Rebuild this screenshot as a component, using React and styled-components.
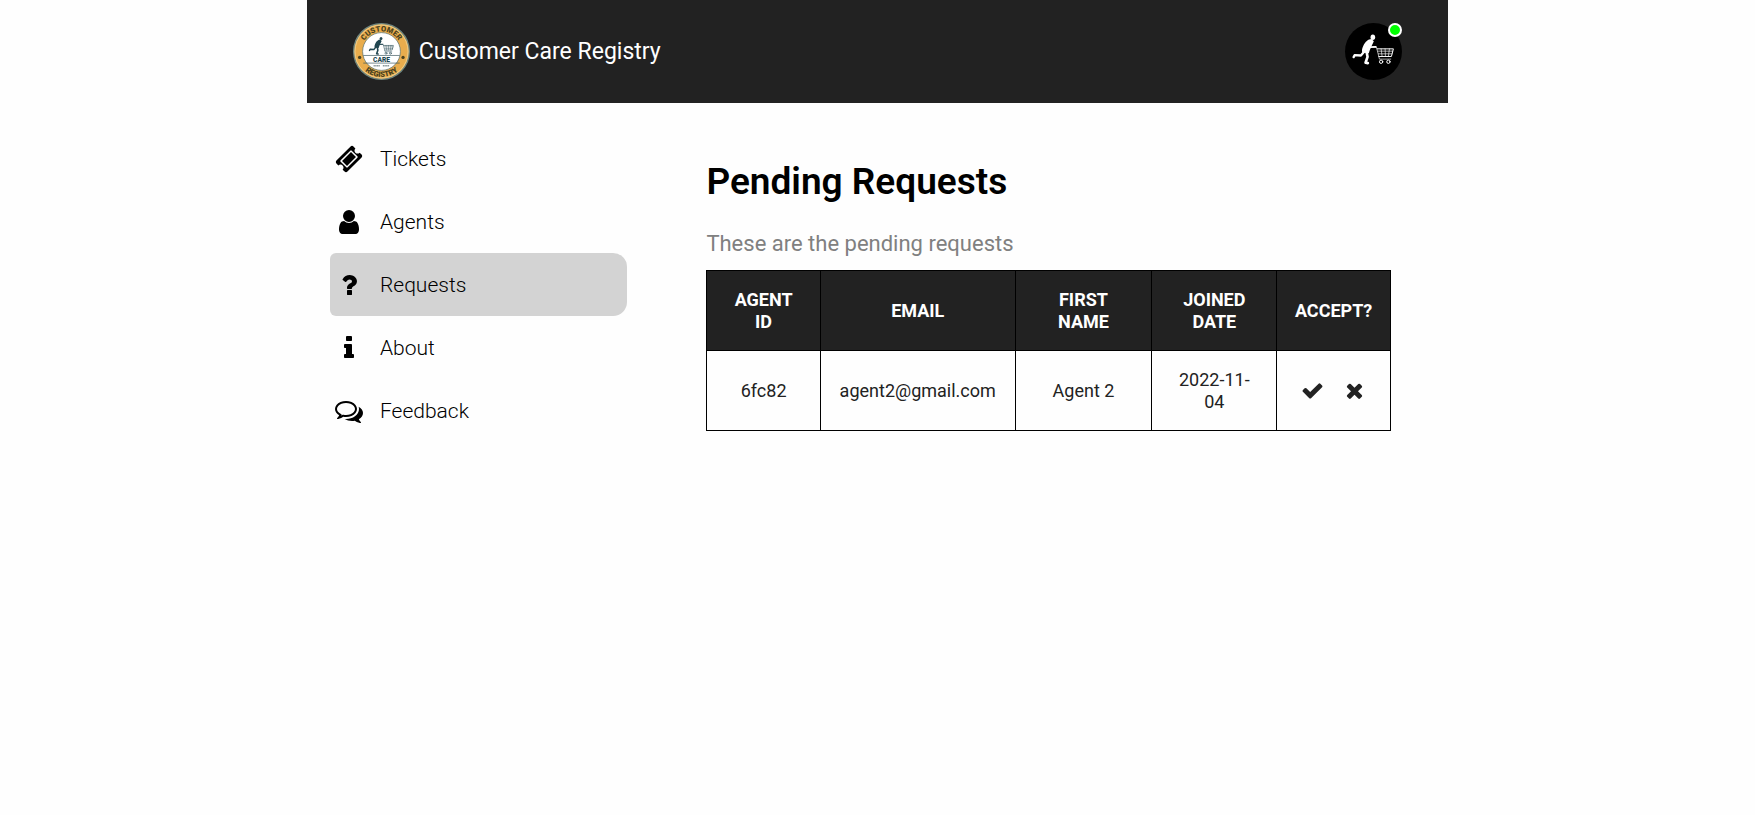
import React from "react";
import styled, { createGlobalStyle } from "styled-components";

const GlobalStyle = createGlobalStyle`
  *, *::before, *::after { box-sizing: border-box; }
  body {
    margin: 0;
    background: #fefefe;
    color: #000;
    font-family: Roboto, "Liberation Sans", sans-serif;
  }
`;

const Page = styled.div`
  width: 65%;
  margin: 0 auto;
`;

const Header = styled.header`
  display: flex;
  align-items: center;
  justify-content: space-between;
  padding: 23px 4%;
  background: #222;
`;

const Brand = styled.a`
  display: flex;
  align-items: center;
  gap: 9px;
  color: #fff;
  font-size: 23px;
  line-height: 29px;
  text-decoration: none;
`;

const Emblem = styled.svg`
  display: block;
  width: 57px;
  height: 57px;
`;

const AvatarButton = styled.button`
  position: relative;
  padding: 0;
  border: 0;
  border-radius: 50%;
  background: #000;
  cursor: pointer;
`;

const OnlineDot = styled.span`
  position: absolute;
  top: 0;
  right: 0;
  width: 14px;
  height: 14px;
  border: 2px solid #fff;
  border-radius: 50%;
  background: #0f0;
`;

const Body = styled.div`
  display: flex;
  align-items: flex-start;
`;

const Sidebar = styled.nav`
  width: 30%;
  padding: 24px 2%;
`;

const NavList = styled.ul`
  margin: 0;
  padding: 0;
  list-style: none;
`;

const NavLink = styled.a`
  display: flex;
  align-items: center;
  gap: 17px;
  height: 63px;
  padding: 0 5px;
  border-radius: 6px 14px 14px 6px;
  background: ${(p) => (p.$active ? "#d3d3d3" : "transparent")};
  color: #000;
  font-size: 21px;
  font-weight: 300;
  text-decoration: none;
`;

const Glyph = styled.svg`
  display: block;
  flex: none;
  width: ${(p) => p.$size}px;
  height: ${(p) => p.$size}px;
  fill: currentColor;
`;

const Content = styled.main`
  width: 70%;
  padding: 57px 5% 40px;
`;

const Title = styled.h1`
  margin: 0;
  font-size: 37px;
  line-height: 44px;
  font-weight: 600;
`;

const Subtitle = styled.p`
  margin: 26px 0 12px;
  color: #808080;
  font-size: 22px;
  line-height: 28px;
`;

const Table = styled.table`
  width: 100%;
  table-layout: fixed;
  border-collapse: collapse;
  color: #222;
  font-size: 18px;
  line-height: 22px;
  text-align: center;
`;

const Column = styled.col`
  width: ${(p) => p.$share}%;
`;

const HeadCell = styled.th`
  height: 80px;
  padding: 0 17px;
  border: 1px solid #000;
  background: #222;
  color: #fff;
  font-weight: 700;
`;

const Cell = styled.td`
  height: 80px;
  padding: 0 17px;
  border: 1px solid #000;
`;

const Actions = styled.div`
  display: flex;
  justify-content: center;
  gap: 19px;
`;

const ActionButton = styled.button`
  padding: 0;
  border: 0;
  background: none;
  color: #222;
  cursor: pointer;
`;

const glyphs = {
  ticket:
    "M1024 452l316 316-572 572-316-316zm-211 979l618-618q19-19 19-45t-19-45l-362-362q-18-18-45-18t-45 18l-618 618q-19 19-19 45t19 45l362 362q18 18 45 18t45-18zm889-637l-907 908q-37 37-90.5 37t-90.5-37l-126-126q56-56 56-136t-56-136-136-56-136 56l-125-126q-37-37-37-90.5t37-90.5l907-906q37-37 90.5-37t90.5 37l125 125q-56 56-56 136t56 136 136 56 136-56l126 125q37 37 37 90.5t-37 90.5z",
  user:
    "M1536 1399q0 109-62.5 187t-150.5 78h-854q-88 0-150.5-78t-62.5-187q0-85 8.5-160.5t31.5-152 58.5-131 94-89 134.5-34.5q131 128 313 128t313-128q76 0 134.5 34.5t94 89 58.5 131 31.5 152 8.5 160.5zm-256-887q0 159-112.5 271.5t-271.5 112.5-271.5-112.5-112.5-271.5 112.5-271.5 271.5-112.5 271.5 112.5 112.5 271.5z",
  question:
    "M1088 1256v240q0 16-12 28t-28 12h-240q-16 0-28-12t-12-28v-240q0-16 12-28t28-12h240q16 0 28 12t12 28zm316-600q0 54-15.5 101t-35 76.5-55 59.5-57.5 43.5-61 35.5q-41 23-68.5 65t-27.5 67q0 17-12 32.5t-28 15.5h-240q-15 0-25.5-18.5t-10.5-37.5v-45q0-83 65-156.5t143-108.5q59-27 84-56t25-76q0-42-46.5-74t-107.5-32q-65 0-108 29-35 25-107 115-13 16-31 16-12 0-25-8l-164-125q-13-10-15.5-25t5.5-28q160-266 464-266 80 0 161 31t146 83 106 127.5 41 158.5z",
  info:
    "M1216 1344v128q0 26-19 45t-45 19h-512q-26 0-45-19t-19-45v-128q0-26 19-45t45-19h64v-384h-64q-26 0-45-19t-19-45v-128q0-26 19-45t45-19h384q26 0 45 19t19 45v576h64q26 0 45 19t19 45zm-128-1152v192q0 26-19 45t-45 19h-256q-26 0-45-19t-19-45v-192q0-26 19-45t45-19h256q26 0 45 19t19 45z",
  comments:
    "M704 384q-153 0-286 52t-211.5 141-78.5 191q0 82 53 158t149 132l97 56-35 84q34-20 62-39l44-31 53 10q78 14 153 14 153 0 286-52t211.5-141 78.5-191-78.5-191-211.5-141-286-52zm0-128q191 0 353.5 68.5t256.5 186.5 94 257-94 257-256.5 186.5-353.5 68.5q-86 0-176-16-124 88-278 128-36 9-86 16h-3q-11 0-20.5-8t-11.5-21q-1-3-1-6.5t.5-6.5 2-6l2.5-5 3.5-5.5 4-5 4.5-5 4-4.5q5-6 23-25t26-29.5 22.5-29 25-38.5 20.5-44q-124-72-195-177t-71-224q0-139 94-257t256.5-186.5 353.5-68.5zm822 1169q10 24 20.5 44t25 38.5 22.5 29 26 29.5 23 25q1 1 4 4.5t4.5 5 4 5 3.5 5.5l2.5 5 2 6 .5 6.5-1 6.5q-3 14-13 22t-22 7q-50-7-86-16-154-40-278-128-90 16-176 16-271 0-472-132 58 4 88 4 161 0 309-45t264-129q125-92 192-212t67-254q0-77-23-152 129 71 204 178t75 230q0 120-71 224.5t-195 176.5z",
  check:
    "M1671 566q0 40-28 68l-724 724-136 136q-28 28-68 28t-68-28l-136-136-362-362q-28-28-28-68t28-68l136-136q28-28 68-28t68 28l294 295 656-657q28-28 68-28t68 28l136 136q28 28 28 68z",
  times:
    "M1490 1322q0 40-28 68l-136 136q-28 28-68 28t-68-28l-294-294-294 294q-28 28-68 28t-68-28l-136-136q-28-28-28-68t28-68l294-294-294-294q-28-28-28-68t28-68l136-136q28-28 68-28t68 28l294 294 294-294q28-28 68-28t68 28l136 136q28 28 28 68t-28 68l-294 294 294 294q28 28 28 68z",
};

function Icon({ name, size }) {
  return (
    <Glyph viewBox="0 0 1792 1792" $size={size} aria-hidden="true">
      <path d={glyphs[name]} />
    </Glyph>
  );
}

/* A running shopper pushing a cart, drawn in a 124 x 90 area. */
function Shopper({ color }) {
  return (
    <g fill="none" stroke={color} strokeLinecap="round" strokeLinejoin="round">
      <ellipse cx="61" cy="8" rx="7" ry="8" fill={color} stroke="none" />
      <path
        d="M57 13 C47 13 38 22 33 32 C29 40 27 46 29 54 L49 56 C51 48 54 42 57 35 L64 20 Z"
        fill={color}
        stroke="none"
      />
      <path d="M46 24 L53 38 L70 37" strokeWidth="5" />
      <path d="M36 50 L25 63 L6 62 L3 68" strokeWidth="7" />
      <path d="M42 51 L45 67 L39 85 L46 86" strokeWidth="8" />
      <path d="M62 37 L72 38 L81 74 L115 74" strokeWidth="2" />
      <path d="M74 43 L123 43 L117 66 L79 66" strokeWidth="3" />
      <path d="M76 50 H121 M78 58 H119 M86 43 L89 66 M98 43 L99 66 M111 43 L108 66" strokeWidth="2" />
      <circle cx="86" cy="82" r="5" strokeWidth="3" />
      <circle cx="108" cy="82" r="5" strokeWidth="3" />
    </g>
  );
}

function BrandLogo() {
  return (
    <Emblem viewBox="0 0 172 172" aria-hidden="true">
      <defs>
        <path id="arc-top" d="M25 86 A61 61 0 0 1 147 86" />
        <path id="arc-bottom" d="M9 86 A77 77 0 0 0 163 86" />
      </defs>
      <circle cx="86" cy="86" r="84" fill="#e7b04f" stroke="#6d8580" strokeWidth="4" />
      <circle cx="86" cy="86" r="80" fill="#e9ad4d" stroke="#f3d9a6" strokeWidth="2" />
      <circle cx="86" cy="86" r="57" fill="#fff" stroke="#4d686a" strokeWidth="2" />
      <g fill="#4a421f" fontFamily="Roboto, sans-serif" fontWeight="900" fontSize="23" textAnchor="middle">
        <text>
          <textPath href="#arc-top" startOffset="50%">CUSTOMER</textPath>
        </text>
        <text>
          <textPath href="#arc-bottom" startOffset="50%">REGISTRY</textPath>
        </text>
      </g>
      <circle cx="20" cy="104" r="5" fill="#4a421f" />
      <circle cx="151" cy="104" r="5" fill="#4a421f" />
      <g transform="translate(48 42) scale(.6)">
        <Shopper color="#214650" />
      </g>
      <path d="M31 98 H141 M31 121 H141" stroke="#37545b" strokeWidth="2" />
      <text x="86" y="117" fill="#214650" fontFamily="Roboto, sans-serif" fontWeight="900" fontSize="20" textAnchor="middle">
        CARE
      </text>
      <path d="M62 129 H82 M90 129 H109" stroke="#8b9a9d" strokeWidth="4" strokeDasharray="4 1" />
    </Emblem>
  );
}

const navItems = [
  { label: "Tickets", icon: "ticket" },
  { label: "Agents", icon: "user" },
  { label: "Requests", icon: "question" },
  { label: "About", icon: "info" },
  { label: "Feedback", icon: "comments" },
];

const columns = [
  { label: "AGENT ID", share: 16.6 },
  { label: "EMAIL", share: 28.5 },
  { label: "FIRST NAME", share: 20 },
  { label: "JOINED DATE", share: 18.3 },
  { label: "ACCEPT?", share: 16.6 },
];

const requests = [
  { id: "6fc82", email: "agent2@gmail.com", name: "Agent 2", joined: "2022-11-04" },
];

export default function App() {
  return (
    <>
      <GlobalStyle />
      <Page>
        <Header>
          <Brand href="#home">
            <BrandLogo />
            Customer Care Registry
          </Brand>
          <AvatarButton type="button" aria-label="Account">
            <Emblem viewBox="0 0 172 172" aria-hidden="true">
              <g transform="translate(23 35)">
                <Shopper color="#fff" />
              </g>
            </Emblem>
            <OnlineDot />
          </AvatarButton>
        </Header>
        <Body>
          <Sidebar>
            <NavList>
              {navItems.map(({ label, icon }) => (
                <li key={label}>
                  <NavLink
                    href={`#${label.toLowerCase()}`}
                    $active={label === "Requests"}
                    aria-current={label === "Requests" ? "page" : undefined}
                  >
                    <Icon name={icon} size={28} />
                    {label}
                  </NavLink>
                </li>
              ))}
            </NavList>
          </Sidebar>
          <Content>
            <Title>Pending Requests</Title>
            <Subtitle>These are the pending requests</Subtitle>
            <Table>
              <colgroup>
                {columns.map((c) => (
                  <Column key={c.label} $share={c.share} />
                ))}
              </colgroup>
              <thead>
                <tr>
                  {columns.map((c) => (
                    <HeadCell key={c.label} scope="col">
                      {c.label}
                    </HeadCell>
                  ))}
                </tr>
              </thead>
              <tbody>
                {requests.map((r) => (
                  <tr key={r.id}>
                    <Cell>{r.id}</Cell>
                    <Cell>{r.email}</Cell>
                    <Cell>{r.name}</Cell>
                    <Cell>{r.joined}</Cell>
                    <Cell>
                      <Actions>
                        <ActionButton type="button" aria-label="Accept">
                          <Icon name="check" size={23} />
                        </ActionButton>
                        <ActionButton type="button" aria-label="Decline">
                          <Icon name="times" size={23} />
                        </ActionButton>
                      </Actions>
                    </Cell>
                  </tr>
                ))}
              </tbody>
            </Table>
          </Content>
        </Body>
      </Page>
    </>
  );
}
